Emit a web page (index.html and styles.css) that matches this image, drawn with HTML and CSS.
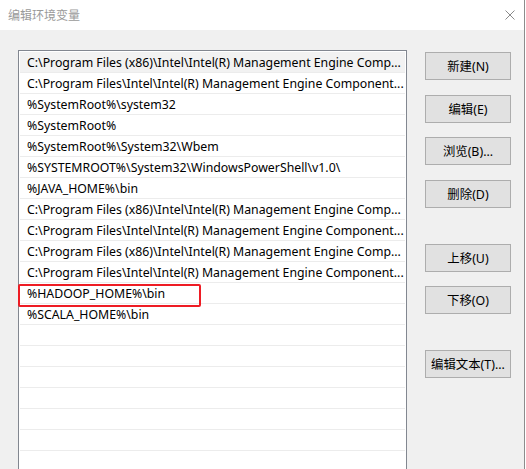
FILE: index.html
```html
<!DOCTYPE html>
<html lang="zh-CN">
<head>
<meta charset="utf-8">
<title>编辑环境变量</title>
<link rel="stylesheet" href="styles.css">
</head>
<body>
<div class="window">
  <div class="titlebar">
    <span class="title">编辑环境变量</span>
    <svg class="close" width="10" height="10" viewBox="0 0 10 10" aria-hidden="true">
      <path d="M0.5 0.5 L9.5 9.5 M9.5 0.5 L0.5 9.5" stroke="#8a8a8a" stroke-width="1" fill="none"/>
    </svg>
  </div>
  <div class="body">
    <div class="list">
      <div class="row selected">C:\Program Files (x86)\Intel\Intel(R) Management Engine Comp...</div>
      <div class="row">C:\Program Files\Intel\Intel(R) Management Engine Component...</div>
      <div class="row">%SystemRoot%\system32</div>
      <div class="row">%SystemRoot%</div>
      <div class="row">%SystemRoot%\System32\Wbem</div>
      <div class="row">%SYSTEMROOT%\System32\WindowsPowerShell\v1.0\</div>
      <div class="row">%JAVA_HOME%\bin</div>
      <div class="row">C:\Program Files (x86)\Intel\Intel(R) Management Engine Comp...</div>
      <div class="row">C:\Program Files\Intel\Intel(R) Management Engine Component...</div>
      <div class="row">C:\Program Files (x86)\Intel\Intel(R) Management Engine Comp...</div>
      <div class="row">C:\Program Files\Intel\Intel(R) Management Engine Component...</div>
      <div class="row marked">%HADOOP_HOME%\bin<span class="mark"></span></div>
      <div class="row">%SCALA_HOME%\bin</div>
      <div class="row"></div>
      <div class="row"></div>
      <div class="row"></div>
      <div class="row"></div>
      <div class="row"></div>
      <div class="row"></div>
      <div class="row"></div>
    </div>
    <div class="actions">
      <button class="btn b-new">新建(N)</button>
      <button class="btn b-edit">编辑(E)</button>
      <button class="btn b-browse">浏览(B)...</button>
      <button class="btn b-delete">删除(D)</button>
      <button class="btn b-up">上移(U)</button>
      <button class="btn b-down">下移(O)</button>
      <button class="btn b-text">编辑文本(T)...</button>
    </div>
  </div>
</div>
</body>
</html>
```
FILE: styles.css
```css
html, body {
  margin: 0;
  padding: 0;
  background: #ffffff;
}

body {
  width: 526px;
  height: 469px;
  overflow: hidden;
  font-family: "Noto Sans", "Noto Sans CJK SC", sans-serif;
  font-size: 12px;
  color: #000;
}

.window {
  width: 524px;
  height: 469px;
  border-right: 1px solid #8c8c8c;
  background: #f0f0f0;
  display: flex;
  flex-direction: column;
  overflow: hidden;
}

.titlebar {
  height: 30px;
  flex: none;
  background: #ffffff;
  display: flex;
  align-items: center;
  justify-content: space-between;
  padding: 0 9px 0 8px;
}

.title {
  color: #9a9a9a;
  font-family: "Noto Sans CJK SC", sans-serif;
  font-size: 12px;
  margin-top: -1px;
}

.close {
  display: block;
}

.body {
  display: flex;
  align-items: flex-start;
  padding: 20px 0 0 18px;
  gap: 18px;
}

.list {
  width: 387px;
  flex: none;
  background: #fff;
  border: 1px solid #828790;
  border-bottom: none;
  padding-top: 1px;
}

.row {
  position: relative;
  height: 20px;
  line-height: 21px;
  margin: 0 1px;
  padding-left: 7px;
  border-bottom: 1px solid #ececec;
  white-space: nowrap;
  font-size: 12.3px;
}

.row.selected {
  background: #f2f2f2;
}

/* red annotation frame drawn over the HADOOP row */
.mark {
  position: absolute;
  left: -2px;
  top: 1px;
  width: 183px;
  height: 23px;
  box-sizing: border-box;
  border: 2px solid #ee1c24;
  border-radius: 2px;
}

.actions {
  display: flex;
  flex-direction: column;
  width: 86px;
}

.btn {
  height: 28px;
  width: 86px;
  box-sizing: border-box;
  background: #e1e1e1;
  border: 1px solid #adadad;
  border-radius: 0;
  font-family: "Noto Sans", "Noto Sans CJK SC", sans-serif;
  font-size: 12.4px;
  color: #000;
  padding: 0;
  margin: 0;
}

.b-new { margin-top: 2px; }
.b-edit { margin-top: 15px; }
.b-browse { margin-top: 14px; }
.b-delete { margin-top: 15px; }
.b-up { margin-top: 36px; }
.b-down { margin-top: 14px; }
.b-text { margin-top: 36px; }
```
